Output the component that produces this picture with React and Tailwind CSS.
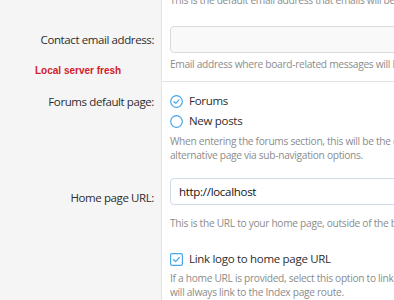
const font = { fontFamily: '"Open Sans", "Noto Sans", sans-serif' }

function RadioIcon({ checked }) {
  return (
    <svg width="13" height="13" viewBox="0 0 13 13" className="shrink-0">
      <circle cx="6.5" cy="6.5" r="5.8" fill="none" stroke="#47a7eb" strokeWidth="1.2" />
      {checked && <path d="M4 6.7 L5.8 8.4 L9 4.8" fill="none" stroke="#47a7eb" strokeWidth="1.2" strokeLinecap="round" strokeLinejoin="round" />}
    </svg>
  )
}

function CheckIcon() {
  return (
    <svg width="13" height="13" viewBox="0 0 13 13" className="shrink-0">
      <rect x="0.6" y="0.6" width="11.8" height="11.8" rx="1.5" fill="none" stroke="#47a7eb" strokeWidth="1.2" />
      <path d="M3.6 6.7 L5.6 8.6 L9.4 4.4" fill="none" stroke="#47a7eb" strokeWidth="1.3" strokeLinecap="round" strokeLinejoin="round" />
    </svg>
  )
}

function Hint({ children }) {
  return <div className="text-[10.2px] leading-[14px] tracking-[-0.3px] text-[#8c8c8c] whitespace-nowrap">{children}</div>
}

export default function App() {
  return (
    <div className="w-[394px] h-[300px] overflow-hidden bg-white text-[#2d2d2d]" style={font}>
      <div className="flex w-[640px] min-h-[300px]">
        <div className="w-[162px] shrink-0 bg-[#f5f5f5] border-r border-[#e4e4e4]">
          <div className="h-[26px]" />
          <div className="h-[27px] flex items-center justify-end pr-[7px] text-[11.5px] tracking-[-0.4px]">Contact email address:</div>
          <div className="pl-[35px] pt-[10px] text-[10px] font-bold text-[#d3202a]" style={{ fontFamily: '"Liberation Sans", Arial, sans-serif' }}>Local server fresh</div>
          <div className="mt-[14px] h-[20px] flex items-center justify-end pr-[7px] text-[11.5px] tracking-[-0.4px]">Forums default page:</div>
          <div className="mt-[72px] h-[27px] flex items-center justify-end pr-[7px] text-[11.5px] tracking-[-0.4px]">Home page URL:</div>
        </div>
        <div className="flex-1">
          <div className="pl-[8px]">
            <div className="-mt-[7px]">
              <Hint>This is the default email address that emails will be sent from.</Hint>
            </div>
            <div className="mt-[19px] h-[27px] w-[400px] rounded-[4px] border border-[#dadada] bg-[#f9f9f9]" />
            <div className="mt-[4px]">
              <Hint>Email address where board-related messages will be sent.</Hint>
            </div>
          </div>
          <div className="mt-[10px] border-t border-[#e2e2e2] pl-[8px] pt-[9px]">
            <div className="h-[20px] flex items-center gap-[6px] text-[11.5px] tracking-[-0.3px]">
              <RadioIcon checked />
              <span>Forums</span>
            </div>
            <div className="h-[20px] flex items-center gap-[6px] text-[11.5px] tracking-[-0.3px]">
              <RadioIcon />
              <span>New posts</span>
            </div>
            <div className="mt-[3px]">
              <Hint>When entering the forums section, this will be the default page shown. Users can still access the</Hint>
              <Hint>alternative page via sub-navigation options.</Hint>
            </div>
            <div className="mt-[16px] h-[27px] w-[400px] rounded-[4px] border border-[#cfdbe6] bg-white flex items-center px-[8px] text-[11.5px] tracking-[-0.3px] text-[#141414]">
              http://localhost
            </div>
            <div className="mt-[11px]">
              <Hint>This is the URL to your home page, outside of the board. This is used in the breadcrumb.</Hint>
            </div>
            <div className="mt-[19px] h-[20px] flex items-center gap-[6px] text-[11.5px] tracking-[-0.3px]">
              <CheckIcon />
              <span>Link logo to home page URL</span>
            </div>
            <div className="mt-[2px]">
              <Hint>If a home URL is provided, select this option to link the logo to it. Otherwise, the logo</Hint>
              <Hint>will always link to the Index page route.</Hint>
            </div>
          </div>
        </div>
      </div>
    </div>
  )
}
